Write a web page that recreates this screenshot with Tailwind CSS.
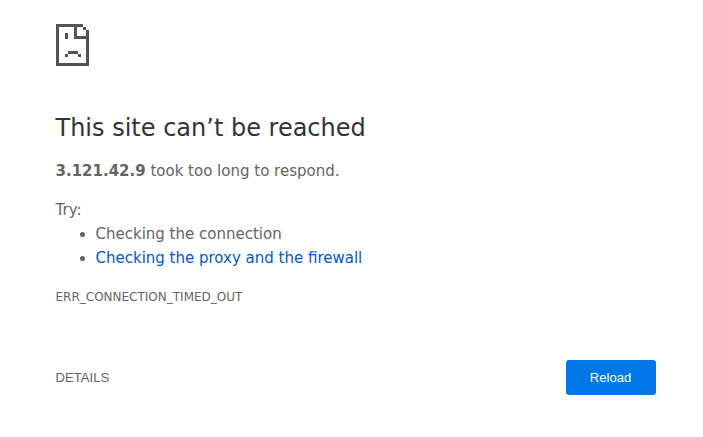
<!DOCTYPE html>
<html lang="en">
<head>
<meta charset="utf-8">
<title>3.121.42.9</title>
<script src="https://cdn.jsdelivr.net/npm/@tailwindcss/browser@4"></script>
</head>
<body class="bg-white font-['DejaVu_Sans',sans-serif] text-[15px] leading-6 text-[#646464]">
<main class="ml-[55.5px] w-[600px] pt-[24px]">
  <svg class="ml-[0.5px] block h-[42px] w-[33px]" viewBox="0 0 33 42" fill="#535353" shape-rendering="crispEdges">
    <path d="M0 0H27V3H3V39H30V15H18V3H21V12H30V6H33V42H0Z"/>
    <path d="M27 3H30V6H27ZM9 9H12V15H9ZM12 27H22V30H12ZM9 30H12V33H9ZM22 30H25V33H22Z"/>
  </svg>
  <h1 class="mt-[47px] text-[24px] leading-[30px] text-[#333]">This site can’t be reached</h1>
  <p class="mt-4"><strong class="font-bold">3.121.42.9</strong> took too long to respond.</p>
  <p class="mt-[15px]">Try:</p>
  <ul class="list-disc pl-10">
    <li>Checking the connection</li>
    <li><a href="#buttons" class="text-[#0058cf]">Checking the proxy and the firewall</a></li>
  </ul>
  <div class="mt-[15px] text-[12px]">ERR_CONNECTION_TIMED_OUT</div>
  <div id="buttons" class="mt-[51px] flex items-center justify-between font-['Liberation_Sans',sans-serif] text-[13.125px]">
    <button>DETAILS</button>
    <button class="h-[35px] w-[90px] rounded-[3px] bg-[#0078e7] text-white">Reload</button>
  </div>
</main>
</body>
</html>
